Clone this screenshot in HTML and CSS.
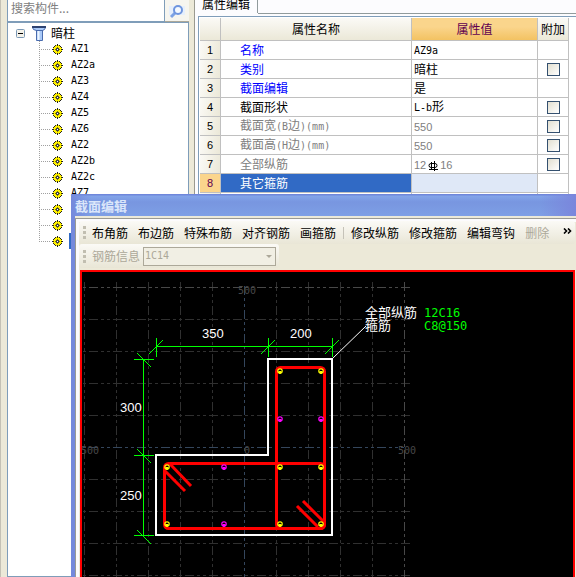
FILE: index.html
```html
<!DOCTYPE html>
<html lang="zh-CN">
<head>
<meta charset="utf-8">
<title>截面编辑</title>
<link rel="stylesheet" href="styles.css">
</head>
<body>
<svg class="defs" aria-hidden="true">
  <symbol id="gear" viewBox="0 0 11 11">
    <path d="M3 1h5v1h1v1h1v5h-1v1h-1v1h-5v-1h-1v-1h-1v-5h1v-1h1z" fill="#fff200"/>
    <path d="M5 0h1v2h-1zM5 9h1v2h-1zM0 5h2v1h-2zM9 5h2v1h-2zM2 2h1v1h-1zM8 2h1v1h-1zM2 8h1v1h-1zM8 8h1v1h-1zM3 1h1v1h-1zM7 1h1v1h-1zM3 9h1v1h-1zM7 9h1v1h-1zM1 3h1v1h-1zM1 7h1v1h-1zM9 3h1v1h-1zM9 7h1v1h-1z" fill="#222"/>
    <path d="M4 4h3v3h-3z" fill="#444"/><path d="M5 5h1v1h-1z" fill="#fff"/>
    <path d="M5 3h1v1h-1zM5 7h1v1h-1zM3 5h1v1h-1zM7 5h1v1h-1z" fill="#77720c"/>
  </symbol>
  <symbol id="bar" viewBox="-3 -3 6 6">
    <circle r="2.200" fill="none" stroke="currentColor" stroke-width="1.200"/>
    <path d="M-1.500 0h3v2l-1 1h-1l-1-1z" fill="currentColor"/>
  </symbol>
</svg>
<div class="app">
  <aside class="side">
    <div class="search">
      <input type="text" placeholder="搜索构件..." aria-label="搜索构件">
      <button type="button" aria-label="搜索">
        <svg width="16" height="16" viewBox="0 0 16 16"><path d="M0 3h16v9h-16z" fill="#e6effc"/><path d="M2 14l4-4" stroke="#7da2e4" stroke-width="3"/><circle cx="9" cy="7" r="4" fill="#f4f9ff" stroke="#6f95de" stroke-width="2"/></svg>
      </button>
    </div>
    <div class="tree">
      <div class="root">
        <svg width="9" height="9" viewBox="0 0 9 9"><rect x=".5" y=".5" width="8" height="8" rx="1" fill="#f4f2ea" stroke="#7b98b5"/><path d="M2 4.500h5" stroke="#000"/></svg>
        <svg class="column" width="14" height="15" viewBox="0 0 14 15"><path d="M.5 1.500h13l-1 2-2 1v10h-6v-10l-3-1z" fill="#a9c9f8" stroke="#4a6cae"/><path d="M0 1h14" stroke="#2c4272" stroke-width="2"/><path d="M4 4.500h7" stroke="#4a6cae"/><path d="M6.500 5v9" stroke="#eef6ff" stroke-width="2"/></svg>
        <span>暗柱</span>
      </div>
      <ul>
        <li><svg><use href="#gear"/></svg><span>AZ1</span></li>
        <li><svg><use href="#gear"/></svg><span>AZ2a</span></li>
        <li><svg><use href="#gear"/></svg><span>AZ3</span></li>
        <li><svg><use href="#gear"/></svg><span>AZ4</span></li>
        <li><svg><use href="#gear"/></svg><span>AZ5</span></li>
        <li><svg><use href="#gear"/></svg><span>AZ6</span></li>
        <li><svg><use href="#gear"/></svg><span>AZ2</span></li>
        <li><svg><use href="#gear"/></svg><span>AZ2b</span></li>
        <li><svg><use href="#gear"/></svg><span>AZ2c</span></li>
        <li><svg><use href="#gear"/></svg><span>AZ7</span></li>
        <li><svg><use href="#gear"/></svg></li>
        <li><svg><use href="#gear"/></svg></li>
        <li><svg><use href="#gear"/></svg><span class="selected"></span></li>
      </ul>
    </div>
  </aside>
  <main class="props">
    <div class="tabs"><button type="button" class="tab">属性编辑</button></div>
    <div class="sheet">
      <table>
        <colgroup><col class="c-num"><col class="c-name"><col class="c-value"><col class="c-add"></colgroup>
        <thead><tr><th></th><th>属性名称</th><th class="hot">属性值</th><th>附加</th></tr></thead>
        <tbody>
          <tr><th>1</th><td class="link">名称</td><td><span class="lat">AZ9a</span></td><td></td></tr>
          <tr><th>2</th><td class="link">类别</td><td>暗柱</td><td><input type="checkbox" aria-label="附加 类别"></td></tr>
          <tr><th>3</th><td class="link">截面编辑</td><td>是</td><td></td></tr>
          <tr><th>4</th><td>截面形状</td><td><span class="lat">L-b</span>形</td><td><input type="checkbox" aria-label="附加 截面形状"></td></tr>
          <tr class="dim"><th>5</th><td>截面宽<span class="lat">(B</span>边<span class="lat">)(mm)</span></td><td><span class="num">550</span></td><td><input type="checkbox" aria-label="附加 截面宽"></td></tr>
          <tr class="dim"><th>6</th><td>截面高<span class="lat">(H</span>边<span class="lat">)(mm)</span></td><td><span class="num">550</span></td><td><input type="checkbox" aria-label="附加 截面高"></td></tr>
          <tr class="dim"><th>7</th><td>全部纵筋</td><td><span class="num">12</span><svg class="rebar" width="11" height="10" viewBox="0 0 11 10"><path d="M3.500 1v7M6.500 0v10M1 8.500h9" stroke="#000" fill="none"/><path d="M3 2.500h4a2 2 0 0 1 2 2v0a2 2 0 0 1-2 2h-4a2 2 0 0 1-2-2v0a2 2 0 0 1 2-2z" stroke="#000" fill="none"/></svg><span class="num">16</span></td><td><input type="checkbox" aria-label="附加 全部纵筋"></td></tr>
          <tr class="current"><th>8</th><td>其它箍筋</td><td></td><td></td></tr>
          <tr><th></th><td></td><td></td><td></td></tr>
        </tbody>
      </table>
    </div>
  </main>
  <section class="window">
    <h1>截面编辑</h1>
    <div class="client">
      <div class="toolbar">
        <i class="grip"></i>
        <button type="button">布角筋</button>
        <button type="button">布边筋</button>
        <button type="button">特殊布筋</button>
        <button type="button">对齐钢筋</button>
        <button type="button">画箍筋</button>
        <i class="sep"></i>
        <button type="button">修改纵筋</button>
        <button type="button">修改箍筋</button>
        <button type="button">编辑弯钩</button>
        <button type="button" disabled>删除</button>
        <button type="button" class="more" aria-label="更多"><svg width="9" height="6" viewBox="0 0 9 6"><path d="M1 .5l2.500 2.500L1 5.500M5 .5l2.500 2.500L5 5.500" fill="none" stroke="#000" stroke-width="1.600"/></svg></button>
      </div>
      <div class="toolbar info">
        <i class="grip"></i>
        <label for="bar-info">钢筋信息</label>
        <span class="combo"><select id="bar-info" disabled><option>1C14</option></select></span>
      </div>
      <div class="canvas">
        <svg width="100%" height="100%">
          <g transform="translate(-82 -272)">
            <g class="grid">
              <path d="M65 319.500H410M65 351.500H410M65 383.500H410M65 415.500H410M65 479.500H410M65 511.500H410M65 543.500H410M65 575.500H410"/>
              <path d="M84.500 282V577M116.500 282V577M148.500 282V577M180.500 282V577M212.500 282V577M276.500 282V577M308.500 282V577M340.500 282V577M372.500 282V577"/>
              <path class="edge" d="M65 287.500H410M404.500 282V577"/>
              <path class="axis" d="M65 447.500H404M244.500 286V577"/>
            </g>
            <g class="scale"><text x="238" y="294">500</text><text x="81" y="454">500</text><text x="244" y="454">0</text><text x="398" y="454">500</text></g>
            <path class="outline" d="M268 359H332V535H156V455H268Z"/>
            <g class="dims">
              <path d="M156 346.500H332M156.500 338V357M268.500 338V357M332.500 338V357M143.500 359V535M134 359.500H154M134 455.500H154M134 535.500H154"/>
              <path d="M149 354l14-14M261 354l14-14M325 354l14-14M137 353l14 14M137 449l14 14M137 530l14 14"/>
            </g>
            <g class="ties">
              <rect x="276.500" y="367.500" width="48" height="161" rx="4"/>
              <rect x="164.500" y="463.500" width="160" height="65" rx="4"/>
              <path d="M170 464l21 22M165 471l20 20M303 501l21 21M297 506l21 21"/>
            </g>
            <g class="corner">
              <use href="#bar" x="277" y="368" width="6" height="6"/><use href="#bar" x="318" y="368" width="6" height="6"/>
              <use href="#bar" x="164" y="464" width="6" height="6"/><use href="#bar" x="277" y="464" width="6" height="6"/><use href="#bar" x="318" y="464" width="6" height="6"/>
              <use href="#bar" x="164" y="521" width="6" height="6"/><use href="#bar" x="277" y="521" width="6" height="6"/><use href="#bar" x="318" y="521" width="6" height="6"/>
            </g>
            <g class="middle">
              <use href="#bar" x="277" y="416" width="6" height="6"/><use href="#bar" x="318" y="416" width="6" height="6"/>
              <use href="#bar" x="221" y="464" width="6" height="6"/><use href="#bar" x="221" y="521" width="6" height="6"/>
            </g>
            <path class="leader" d="M333 358L366 326"/>
            <g class="note">
              <text x="202" y="338">350</text><text x="290" y="338">200</text><text x="120" y="412">300</text><text x="120" y="500">250</text>
              <text class="cjk" x="365" y="317">全部纵筋</text><text class="cjk" x="365" y="330">箍筋</text>
              <text class="value" x="424" y="317">12C16</text><text class="value" x="424" y="330">C8@150</text>
            </g>
          </g>
        </svg>
      </div>
    </div>
  </section>
</div>
</body>
</html>
```
FILE: styles.css
```css
* { box-sizing: border-box; }
body {
  margin: 0;
  font: 12px/16px "Noto Sans CJK SC", sans-serif;
  color: #000;
  background: #ece9d8;
}
button, input, select { font: inherit; color: inherit; margin: 0; border-radius: 0; }
button { padding: 0; border: 0; background: none; white-space: nowrap; }
.defs { position: absolute; width: 0; height: 0; }
.app { position: relative; display: flex; height: 100vh; overflow: hidden; }
.lat { font: 10px/16px "DejaVu Sans Mono", monospace; }
.num { font: 11px/16px "Liberation Sans", sans-serif; }

.side {
  flex: none;
  display: flex;
  flex-direction: column;
  width: 195px;
  padding: 0 5px 0 6px;
  border-left: 1px solid #c4c1b5;
  border-right: 1px solid #9a9a90;
}
.search { display: flex; height: 22px; border-bottom: 1px solid #aca899; }
.search input {
  flex: 1;
  min-width: 0;
  height: 22px;
  padding: 0 3px 6px;
  border: 1px solid #7f9db9;
  border-top: 0;
  background: #fff;
}
.search input::placeholder { color: #808080; opacity: 1; }
.search button { display: grid; place-items: center; width: 24px; height: 21px; background: #f6f5ef; }
.tree { flex: 1; padding-top: 2px; border: 1px solid #7f9db9; background: #fff; }
.root { display: flex; align-items: center; height: 16px; padding-left: 8px; }
.root .column { margin: 0 5px 0 7px; }
.tree ul { list-style: none; margin: 0; padding: 0 0 0 31px; }
.tree li {
  display: flex;
  align-items: center;
  height: 16px;
  padding-left: 13px;
  background:
    repeating-linear-gradient(90deg, #a0a0a0 0 1px, transparent 1px 2px) 0 8px / 11px 1px no-repeat,
    repeating-linear-gradient(#a0a0a0 0 1px, transparent 1px 2px) 0 0 / 1px 100% no-repeat;
}
.tree li:last-child {
  background:
    repeating-linear-gradient(90deg, #a0a0a0 0 1px, transparent 1px 2px) 0 8px / 11px 1px no-repeat,
    repeating-linear-gradient(#a0a0a0 0 1px, transparent 1px 2px) 0 0 / 1px 8px no-repeat;
}
.tree li svg { flex: none; width: 11px; height: 11px; }
.tree li span { padding: 0 6px 0 8px; font: 10px/16px "DejaVu Sans Mono", monospace; }
.tree li .selected { width: 30px; height: 16px; margin-left: 6px; background: #316ac5; }

.props { flex: 1; min-width: 0; display: flex; flex-direction: column; padding-left: 3px; background: #fcfcfe; }
.tabs { display: flex; height: 16px; }
.tabs::after { content: ""; flex: 1; height: 13px; border-bottom: 1px solid #919b9c; }
.tab { height: 13px; padding: 0 7px 10px 4px; border-right: 1px solid #919b9c; line-height: 8px; }
.sheet { flex: 1; padding: 1px 7px 0 1px; border: 1px solid #7f9db9; border-right: 0; background: #fff; }
table { width: 100%; table-layout: fixed; border-collapse: separate; border-spacing: 0; }
.c-num { width: 21px; }
.c-value { width: 126px; }
.c-add { width: 31px; }
th, td { height: 19px; padding: 0 0 0 2px; border: 0 solid #c0c0c0; border-width: 0 1px 1px 0; line-height: 16px; text-align: left; white-space: nowrap; }
thead th { height: 23px; padding: 0; font-weight: 400; text-align: center; background: linear-gradient(#fbfaf6, #ebe8d8); }
thead .hot { color: #600050; background: linear-gradient(#fad58c 0 40%, #f3c262); }
tbody th { padding: 0; font: 11px/16px "Liberation Sans", sans-serif; text-align: center; background: linear-gradient(100deg, #fbfaf6, #ebe8d8); }
td:nth-child(2) { padding-left: 19px; }
td:nth-child(4) { padding: 0; text-align: center; }
td input {
  appearance: none;
  display: block;
  width: 13px;
  height: 13px;
  margin: 0 auto;
  border: 1px solid #34506f;
  background: linear-gradient(135deg, #e2dfd0, #fff);
}
.link { color: #00f; }
.dim td { color: #808080; }
.rebar { margin: 0 1px 0 2px; vertical-align: -2px; }
.current th { color: #600050; background: #fbd58c; }
.current td:nth-child(2) { color: #fff; background: #316ac5; }
.current td:nth-child(3) { background: #dfe8f7; }

.window {
  position: absolute;
  inset: 194px 0 0 71px;
  display: flex;
  flex-direction: column;
  padding-left: 4px;
  background: #7589dc;
}
.window h1 {
  margin: 0 0 0 -4px;
  height: 22px;
  padding: 2px 0 0 4px;
  font-size: 13px;
  line-height: 20px;
  font-weight: 700;
  color: #dbe6fa;
  background: linear-gradient(90deg, #7589dc, transparent 20px, transparent 93%, #7a86dc), linear-gradient(#6f87db 0 1px, #83a5e9 2px, #7896e0 8px, #7e9fe5);
}
.client {
  flex: 1;
  min-height: 0;
  display: flex;
  flex-direction: column;
  padding: 3px 1px 0 4px;
  border-top: 2px solid #ece9d8;
  box-shadow: inset 1px 1px #9a9a94, inset 4px 4px #fcfbfd;
  background: #ece9d8;
}
.toolbar { display: flex; align-items: center; gap: 10px; flex: none; height: 23px; padding-left: 4px; background: linear-gradient(#fbfaf6, #e9e6d6); border-radius: 3px; }
.grip { width: 3px; height: 13px; margin-right: -4px; background: repeating-linear-gradient(#c1beb0 0 3px, transparent 3px 5px); }
.sep { width: 1px; height: 12px; margin: 0 -3px; background: #c5c2b8; }
.toolbar button:disabled, .info { color: #aca899; }
.toolbar .more { display: flex; margin: -4px 3px 0 auto; }
.info { align-self: flex-start; height: 24px; padding-right: 3px; }
.info label { margin-right: -7px; }
.combo { position: relative; display: flex; }
.combo::after { content: ""; position: absolute; right: 4px; top: 8px; border: 3px solid transparent; border-top-color: #aca899; }
.combo select { appearance: none; width: 133px; height: 19px; padding: 0 1px; border: 1px solid #aca899; background: #f1efe4; font: 10px/16px "DejaVu Sans Mono", monospace; color: #aca899; opacity: 1; }
.canvas { flex: 1; min-height: 0; margin-top: 2px; margin-left: 1px; border: 2px solid #f00; border-bottom: 0; background: #000; overflow: hidden; }
.canvas svg { display: block; }

.grid path { fill: none; stroke: #303030; stroke-dasharray: 9 3 3 3 3 3; }
.grid .edge { stroke: #484848; }
.grid .axis { stroke: #34465c; }
.scale { fill: #484848; font: 10px "DejaVu Sans Mono", monospace; }
.outline { fill: none; stroke: #fff; stroke-width: 2; }
.dims { fill: none; stroke: #0f0; }
.ties { fill: none; stroke: #f00; stroke-width: 3; }
.corner { color: #ff0; }
.middle { color: #f0f; }
.leader { stroke: #fff; }
.note { fill: #fff; font: 13px "Liberation Sans", sans-serif; }
.note .cjk { font: 13px "Noto Sans CJK SC", sans-serif; }
.note .value { fill: #0f0; font: 12px "DejaVu Sans Mono", monospace; }
```
